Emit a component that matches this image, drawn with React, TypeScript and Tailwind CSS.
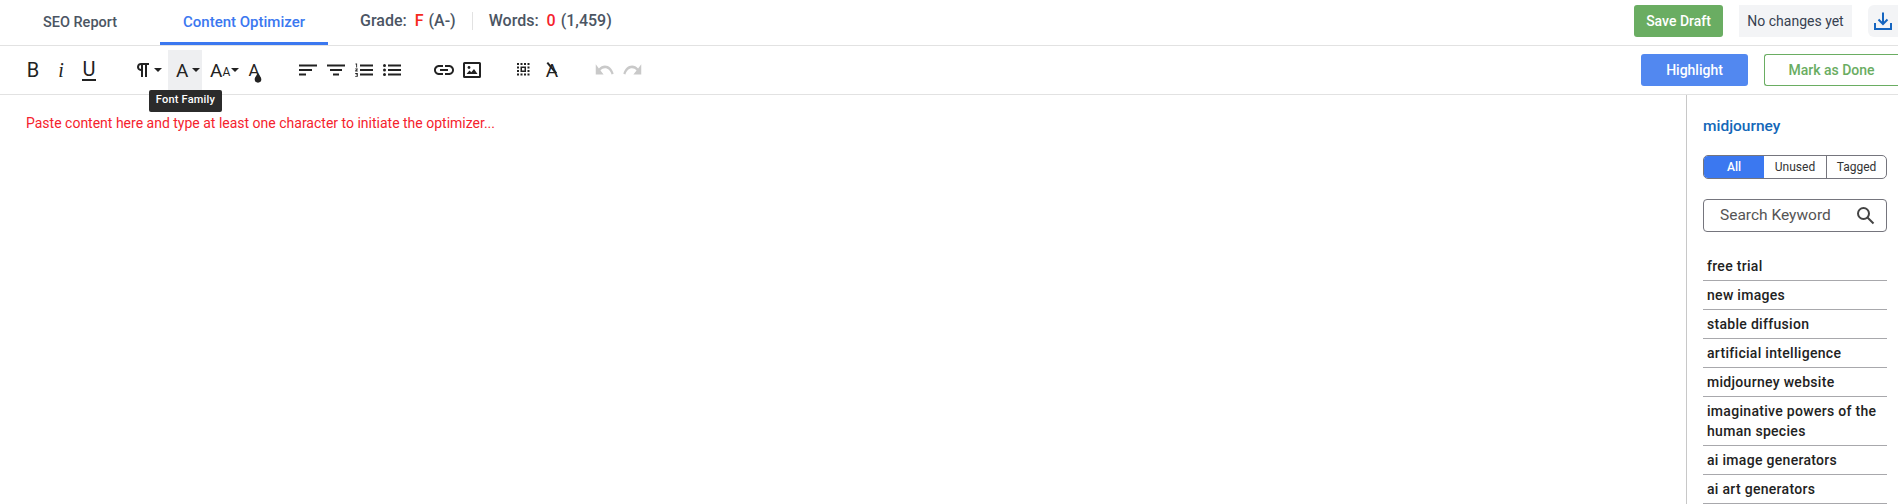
import type { ReactNode } from "react";

const keywords = [
    "free trial",
    "new images",
    "stable diffusion",
    "artificial intelligence",
    "midjourney website",
    "imaginative powers of the human species",
    "ai image generators",
    "ai art generators",
];

function Caret({ className = "ml-[3px]" }: { className?: string }) {
    return <span className={`w-0 h-0 border-x-[4px] border-x-transparent border-t-[4px] border-t-[#222] ${className}`} />;
}

function Btn({ children, className = "" }: { children: ReactNode; className?: string }) {
    return (
        <div className={`w-[28px] h-[40px] flex items-center justify-center text-[#222] shrink-0 ${className}`}>
            {children}
        </div>
    );
}

function Icon({ children, fill = "#222" }: { children: ReactNode; fill?: string }) {
    return (
        <svg width="24" height="24" viewBox="0 0 24 24" fill={fill}>
            {children}
        </svg>
    );
}

export default function App() {
    return (
        <div className="h-screen overflow-hidden bg-white font-['Roboto',sans-serif] text-[#222]">
            {/* top bar */}
            <div className="h-[46px] flex items-stretch border-b border-[#e2e2e2]">
                <div className="w-[160px] flex items-center justify-center text-[14.500px] text-[#4b5563] font-medium">SEO Report</div>
                <div className="w-[168px] flex items-center justify-center text-[15px] text-[#3b78f0] font-medium border-b-[3px] border-[#3b78f0] pt-[3px]">
                    Content Optimizer
                </div>
                <div className="ml-[32px] flex items-center text-[16px] font-medium text-[#4b5563] pb-[4px]">
                    <span>Grade:</span>
                    <span className="ml-[8px] text-[#f5291c]">F</span>
                    <span className="ml-[5px]">(A-)</span>
                    <span className="mx-[16px] w-px h-[18px] bg-[#e2e2e2]" />
                    <span>Words:</span>
                    <span className="ml-[8px] text-[#f5222d]">0</span>
                    <span className="ml-[5px]">(1,459)</span>
                </div>
                <div className="ml-auto flex items-start pt-[5px]">
                    <div className="w-[89px] h-[32px] rounded-[3px] bg-[#6aad62] text-white text-[14px] font-medium flex items-center justify-center">
                        Save Draft
                    </div>
                    <div className="ml-[16px] w-[113px] h-[32px] bg-[#f3f4f6] text-[#374151] text-[14px] flex items-center justify-center">
                        No changes yet
                    </div>
                    <div className="ml-[16px] w-[30px] h-[32px] rounded-l-[6px] bg-[#f3f4f6] flex items-center justify-center">
                        <svg width="20" height="20" viewBox="0 0 20 20" fill="none" stroke="#1565c0" strokeWidth="2">
                            <path d="M10 1.500V12.500M5.500 8.500L10 13L14.500 8.500" />
                            <path d="M2 12V18H18V12" />
                        </svg>
                    </div>
                </div>
            </div>

            {/* toolbar */}
            <div className="h-[49px] flex items-center pl-[19px] border-b border-[#e2e2e2] relative">
                <Btn><span className="text-[20px] leading-none">B</span></Btn>
                <Btn><span className="text-[20px] leading-none italic font-['Liberation_Serif',serif]">i</span></Btn>
                <Btn><span className="text-[20px] leading-none border-b-2 border-[#222] px-[1px]">U</span></Btn>
                <Btn className="ml-[31px] w-[34px]! justify-start!">
                    <svg width="18" height="18" viewBox="3 3 18 18" fill="#222">
                        <path d="M10.150 5A4.110 4.110 0 0 0 6.080 8.180 4 4 0 0 0 10 13v6h2V7h2V19h2V7h2V5ZM8 9a2 2 0 0 1 2-2v4A2 2 0 0 1 8 9Z" />
                    </svg>
                    <Caret className="ml-[2px]" />
                </Btn>
                <div className="relative">
                    <Btn className="w-[34px]! h-[41px]! bg-[#eeeff1] justify-start! pl-[8px]">
                        <span className="text-[19px] leading-none">A</span>
                        <Caret className="ml-[4px]" />
                    </Btn>
                    <div className="absolute left-[-19px] top-[40px] z-10 w-[73px] h-[22px] rounded-[2px] bg-[#2b2b2b] text-white text-[11px] tracking-[0.2px] font-medium flex items-center justify-center whitespace-nowrap">
                        Font Family
                    </div>
                </div>
                <Btn className="w-[38px]! ml-[1px] justify-start! pl-[7px]">
                    <span className="text-[19px] leading-none">A</span>
                    <span className="text-[12px] leading-none mt-[4px]">A</span>
                    <Caret className="ml-[1px]" />
                </Btn>
                <Btn className="ml-[-1px] relative">
                    <span className="text-[17px] leading-none">A</span>
                    <svg className="absolute left-[14px] top-[23px]" width="8" height="10" viewBox="0 0 9 12" fill="#222">
                        <path d="M4.500 0C3.500 2 .500 4.800.500 7.600a4 4 0 0 0 8 0C8.500 4.800 5.500 2 4.500 0z" />
                    </svg>
                </Btn>
                <Btn className="ml-[26px]">
                    <Icon><path d="M3 6.500h18v2H3zM3 11h13v2H3zM3 15.500h7v2H3z" /></Icon>
                </Btn>
                <Btn>
                    <Icon><path d="M3 6.500h18v2H3zM6 11h12v2H6zM9 15.500h6v2H9z" /></Icon>
                </Btn>
                <Btn>
                    <Icon>
                        <path d="M8 6.500h13v2H8zM8 11h13v2H8zM8 15.500h13v2H8z" />
                        <path d="M3.500 5.500h1.600v4H4.200V6.400h-.700zM3.200 10.400h2.600v.900L4.500 12.500h1.300v.900H3.200v-.800l1.400-1.300H3.200zM3.200 15h2.600v3.800H3.200v-.800h1.700v-.700H3.800v-.700h1.100v-.700H3.200z" />
                    </Icon>
                </Btn>
                <Btn>
                    <Icon>
                        <path d="M8 6.500h13v2H8zM8 11h13v2H8zM8 15.500h13v2H8z" />
                        <circle cx="4.500" cy="7.500" r="1.500" />
                        <circle cx="4.500" cy="12" r="1.500" />
                        <circle cx="4.500" cy="16.500" r="1.500" />
                    </Icon>
                </Btn>
                <Btn className="ml-[24px]">
                    <Icon><path d="M3.900 12c0-1.710 1.390-3.100 3.100-3.100h4V7H7c-2.760 0-5 2.240-5 5s2.240 5 5 5h4v-1.900H7c-1.710 0-3.100-1.390-3.100-3.100zM8 13h8v-2H8v2zm9-6h-4v1.900h4c1.710 0 3.100 1.390 3.100 3.100s-1.390 3.100-3.100 3.100h-4V17h4c2.760 0 5-2.240 5-5s-2.240-5-5-5z" /></Icon>
                </Btn>
                <Btn>
                    <Icon>
                        <path fillRule="evenodd" d="M4.500 4h15A1.500 1.500 0 0 1 21 5.500v13a1.500 1.500 0 0 1-1.500 1.500h-15A1.500 1.500 0 0 1 3 18.500v-13A1.500 1.500 0 0 1 4.500 4zM5 6v12h14V6z" />
                        <circle cx="9" cy="9.500" r="1.400" />
                        <path d="M6.500 16l3-3.500 1.800 1.800 2.700-3.300 3.500 5z" />
                    </Icon>
                </Btn>
                <Btn className="ml-[24px]">
                    <Icon>
                        <path d="M5 5h2v2H5zM8.500 5h2v2h-2zM12 5h2v2h-2zM15.500 5h2v2h-2zM5 8.500h2v2H5zM5 12h2v2H5zM5 15.500h2v2H5zM8.500 15.500h2v2h-2zM12 15.500h2v2h-2zM15.500 15.500h2v2h-2zM15.500 8.500h2v2h-2zM15.500 12h2v2h-2z" />
                        <path fillRule="evenodd" d="M8.500 8.500h5.500v5.500H8.500zM10 10v2.500h2.500V10z" />
                    </Icon>
                </Btn>
                <Btn className="relative">
                    <span className="text-[19px] leading-none">A</span>
                    <span className="absolute left-[7px] top-[17px] h-[1.500px] w-[14px] bg-[#222] rotate-[50deg]" />
                </Btn>
                <Btn className="ml-[24px]">
                    <svg width="21" height="16" viewBox="0 5 24 14" preserveAspectRatio="none" fill="#c9c9c9">
                        <path d="M12.500 8c-2.650 0-5.050.990-6.900 2.600L2 7v9h9l-3.620-3.620c1.390-1.160 3.160-1.880 5.120-1.880 3.540 0 6.550 2.310 7.600 5.500l2.370-.780C21.080 11.030 17.150 8 12.500 8z" />
                    </svg>
                </Btn>
                <Btn>
                    <svg width="21" height="16" viewBox="0 5 24 14" preserveAspectRatio="none" fill="#c9c9c9">
                        <path d="M18.400 10.600C16.550 8.990 14.150 8 11.500 8c-4.650 0-8.580 3.030-9.960 7.220L3.900 16c1.050-3.190 4.050-5.500 7.600-5.500 1.950 0 3.730.720 5.120 1.880L13 16h9V7l-3.600 3.600z" />
                    </svg>
                </Btn>

                <div className="ml-auto flex items-center">
                    <div className="w-[107px] h-[32px] rounded-[3px] bg-[#5288f0] text-white text-[14px] font-medium flex items-center justify-center">
                        Highlight
                    </div>
                    <div className="ml-[16px] w-[134px] h-[32px] rounded-l-[3px] border border-r-0 border-[#6aad62] text-[#6aad62] text-[14px] font-medium flex items-center justify-center">
                        Mark as Done
                    </div>
                </div>
            </div>

            {/* body */}
            <div className="flex h-[409px]">
                <div className="flex-1 pl-[26px] pt-[19px] text-[14px] leading-[18px] text-[#f5222d]">
                    Paste content here and type at least one character to initiate the optimizer...
                </div>
                <aside className="w-[212px] shrink-0 border-l border-[#c8c8c8] pl-[16px] pr-[11px] pt-[19px]">
                    <div className="text-[15.500px] leading-[24px] font-medium text-[#1367b8]">midjourney</div>
                    <div className="mt-[17px] h-[24px] flex rounded-[5px] border border-[#75757d] overflow-hidden text-[12px]">
                        <div className="w-[60px] bg-[#3b78f0] text-white font-medium flex items-center justify-center">All</div>
                        <div className="w-[62px] flex items-center justify-center text-[#333]">Unused</div>
                        <div className="flex-1 border-l border-[#75757d] flex items-center justify-center text-[#333]">Tagged</div>
                    </div>
                    <div className="mt-[20px] h-[33px] rounded-[4px] border border-[#75757d] flex items-center pl-[16px] pr-[11px] text-[#555] text-[15.500px]">
                        <span>Search Keyword</span>
                        <svg className="ml-auto" width="19" height="19" viewBox="0 0 19 19" fill="none" stroke="#444" strokeWidth="2">
                            <circle cx="7.500" cy="7.500" r="5.500" />
                            <path d="M11.500 11.500L17.500 17.500" />
                        </svg>
                    </div>
                    <div className="mt-[20px]">
                        {keywords.map((k) => (
                            <div key={k} className="border-b border-[#a8a8ac] px-[4px] py-[4px] text-[14px] leading-[20px] font-medium tracking-[0.3px] text-[#222]">
                                {k}
                            </div>
                        ))}
                    </div>
                </aside>
            </div>
        </div>
    );
}
